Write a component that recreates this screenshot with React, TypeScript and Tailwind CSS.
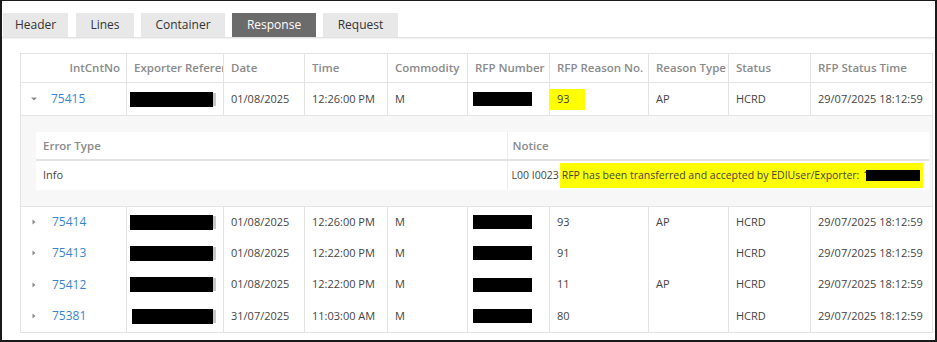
import React from "react";

const cols = [106, 97, 81, 83, 80, 82, 99, 80, 82, 122];
const headers = [
  "IntCntNo",
  "Exporter Reference",
  "Date",
  "Time",
  "Commodity",
  "RFP Number",
  "RFP Reason No.",
  "Reason Type",
  "Status",
  "RFP Status Time",
];

type Row = {
  id: string;
  date: string;
  time: string;
  reason: string;
  type: string;
  h: number;
  boxOffset?: number;
};

const rows: Row[] = [
  { id: "75414", date: "01/08/2025", time: "12:26:00 PM", reason: "93", type: "AP", h: 31 },
  { id: "75413", date: "01/08/2025", time: "12:22:00 PM", reason: "91", type: "", h: 31 },
  { id: "75412", date: "01/08/2025", time: "12:22:00 PM", reason: "11", type: "AP", h: 32 },
  { id: "75381", date: "31/07/2025", time: "11:03:00 AM", reason: "80", type: "", h: 32, boxOffset: 2 },
];

function ArrowRight() {
  return (
    <svg width="6" height="8" viewBox="0 0 6 8" className="inline-block">
      <path d="M1.5 1.5 L4.5 4 L1.5 6.5 Z" fill="#8a8a8a" />
    </svg>
  );
}

function ArrowDown() {
  return (
    <svg width="8" height="6" viewBox="0 0 8 6" className="inline-block">
      <path d="M1 1.5 L7 1.5 L4 4.5 Z" fill="#8a8a8a" />
    </svg>
  );
}

const td = "border-r border-[#e3e3e3] px-[7px] whitespace-nowrap overflow-hidden align-middle";

function Redact({ w = 85, offset = 0 }: { w?: number; offset?: number }) {
  return (
    <div className="flex items-center" style={{ marginLeft: offset }}>
      <div className="h-[15px] bg-black" style={{ width: w }} />
      <span className="w-[3px] h-[13px] bg-[#c8c8c8]" />
    </div>
  );
}

export default function App() {
  return (
    <div
      className="w-[937px] h-[342px] overflow-hidden bg-white border-t border-l-2 border-r-2 border-b-2 border-[#1a1a1a] text-[11px] text-[#444]"
      style={{ fontFamily: '"Open Sans", "Noto Sans", sans-serif' }}
    >
      {/* Tabs */}
      <div className="pt-[12px] flex items-end h-[37px] border-b border-[#e2e2e2] shadow-[0_1px_1px_rgba(0,0,0,0.05)] pl-[1px]">
        <div className="flex gap-[8px] items-end">
          <div className="w-[65px] h-[24px] bg-[#e8e8e8] flex items-center justify-center text-[#333] text-[12px]">Header</div>
          <div className="w-[58px] h-[24px] bg-[#e8e8e8] flex items-center justify-center text-[#333] text-[12px]">Lines</div>
          <div className="w-[84px] h-[24px] bg-[#e8e8e8] flex items-center justify-center text-[#333] text-[12px] -ml-[1px]">Container</div>
          <div className="w-[84px] h-[24px] bg-[#6b6b6b] flex items-center justify-center text-white text-[12px] -ml-[1px]">Response</div>
          <div className="w-[75px] h-[24px] bg-[#e8e8e8] flex items-center justify-center text-[#333] text-[12px] -ml-[1px]">Request</div>
        </div>
      </div>

      {/* Grid */}
      <div className="pt-[15px] pl-[18px]">
        <table className="table-fixed border-collapse border border-[#e3e3e3]" style={{ width: 912 }}>
          <colgroup>
            {cols.map((w, i) => (
              <col key={i} style={{ width: w }} />
            ))}
          </colgroup>
          <thead>
            <tr className="h-[29px] border-b border-[#e3e3e3]">
              {headers.map((h, i) => (
                <th
                  key={h}
                  className={`${td} font-semibold text-[11.5px] text-[#8a8a8a] ${i === 0 ? "text-right pr-[6px]" : "text-left"} ${i === 9 ? "border-r-0" : ""}`}
                  style={{ textOverflow: "clip" }}
                >
                  {h}
                </th>
              ))}
            </tr>
          </thead>
          <tbody>
            <tr className="h-[33px] border-b border-[#e3e3e3]">
              <td className={`${td} pl-[9px]`}>
                <span className="inline-flex items-center gap-[13px]">
                  <ArrowDown />
                  <span className="text-[#3a84cf] text-[12px]">75415</span>
                </span>
              </td>
              <td className={`${td} pl-[3px]`}>
                <Redact />
              </td>
              <td className={td}>01/08/2025</td>
              <td className={td}>12:26:00 PM</td>
              <td className={td}>M</td>
              <td className={`${td} pl-[5px]`}>
                <div className="w-[59px] h-[14px] bg-black" />
              </td>
              <td className={`${td} pl-0`}>
                <span className="inline-flex items-center w-[35px] h-[21px] bg-[#ffff00] pl-[7px]">93</span>
              </td>
              <td className={td}>AP</td>
              <td className={td}>HCRD</td>
              <td className={`${td} border-r-0`}>29/07/2025 18:12:59</td>
            </tr>
            <tr className="h-[91px] bg-[#f7f7f7] border-b border-[#e3e3e3]">
              <td colSpan={10} className="px-[15px] py-0 align-middle">
                <table className="table-fixed border-collapse bg-white w-[893px]">
                  <colgroup>
                    <col style={{ width: 471 }} />
                    <col style={{ width: 422 }} />
                  </colgroup>
                  <thead>
                    <tr className="h-[28px] border-b-2 border-[#e3e3e3]">
                      <th className="text-left font-semibold text-[11.5px] text-[#8a8a8a] px-[7px]">Error Type</th>
                      <th className="text-left font-semibold text-[11.5px] text-[#8a8a8a] px-[5px] border-l border-[#ececec]">Notice</th>
                    </tr>
                  </thead>
                  <tbody>
                    <tr className="h-[30px]">
                      <td className="px-[7px]">Info</td>
                      <td className="pl-[4px] pr-0 border-l border-[#ececec] whitespace-nowrap overflow-hidden">
                        <span className="text-[10.5px]">L00 I0023</span>
                        <span className="inline-flex items-center bg-[#ffff00] h-[25px] pl-[2px] pr-[3px] ml-[1px] text-[10.5px]">
                          RFP has been transferred and accepted by EDIUser/Exporter:
                          <span className="text-[#222] ml-[4px]">1</span>
                          <span className="inline-block w-[54px] h-[11px] bg-black -ml-[3px]" />
                        </span>
                      </td>
                    </tr>
                  </tbody>
                </table>
              </td>
            </tr>
            {rows.map((r) => (
              <tr key={r.id} style={{ height: r.h }}>
                <td className={`${td} pl-[10px]`}>
                  <span className="inline-flex items-center gap-[15px]">
                    <ArrowRight />
                    <span className="text-[#3a84cf] text-[12px]">{r.id}</span>
                  </span>
                </td>
                <td className={`${td} pl-[3px]`}>
                  <Redact offset={r.boxOffset ?? 0} />
                </td>
                <td className={td}>{r.date}</td>
                <td className={td}>{r.time}</td>
                <td className={td}>M</td>
                <td className={`${td} pl-[5px]`}>
                  <div className="w-[59px] h-[14px] bg-black" />
                </td>
                <td className={td}>{r.reason}</td>
                <td className={td}>{r.type}</td>
                <td className={td}>HCRD</td>
                <td className={`${td} border-r-0`}>29/07/2025 18:12:59</td>
              </tr>
            ))}
          </tbody>
        </table>
      </div>
    </div>
  );
}
